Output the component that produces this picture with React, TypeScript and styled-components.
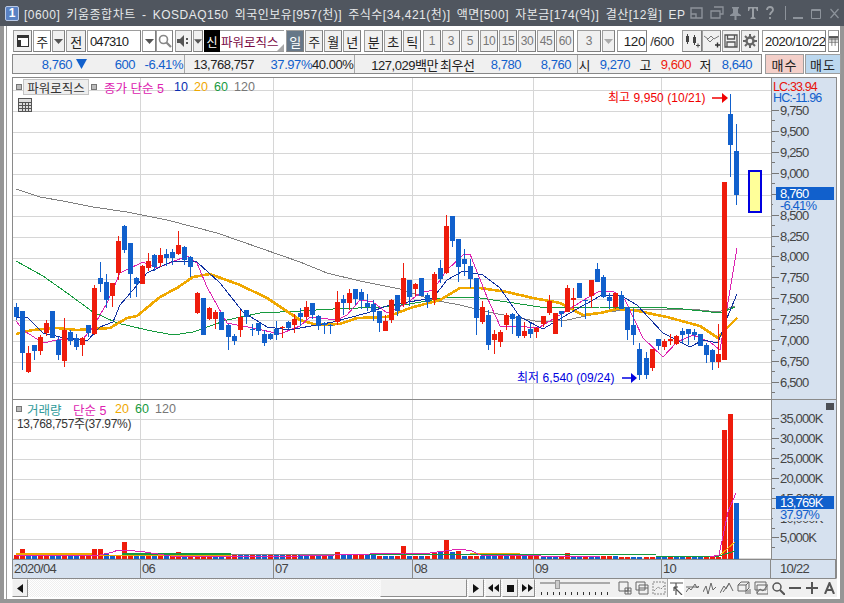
import * as React from 'react';
import styled, { createGlobalStyle } from 'styled-components';

const KR = `"Liberation Sans", "Noto Sans CJK KR", sans-serif`;
const RED = '#ee1c0c';
const BLUE = '#1160cc';
const GRID = '#d6d6d6';
const AXIS_BG = '#d6e1ef';
const LINE = '#8a8a8a';

type Raw = [number, 'r' | 'b', number, number, number, number];
interface Candle {
  x: number;
  color: string;
  wickTop: number;
  top: number;
  bottom: number;
  wickBottom: number;
}

// values were read off three crops, so each block keeps its crop offset
const blocks: { ox: number; oy: number; rows: Raw[] }[] = [
  {
    ox: 0,
    oy: 180,
    rows: [
      [49, 'b', 368, 380, 410, 420], [67, 'b', 393, 393, 518, 570], [85, 'r', 498, 518, 575, 578],
      [103, 'b', 495, 495, 513, 540], [121, 'r', 465, 471, 513, 525], [139, 'r', 420, 429, 458, 467],
      [157, 'b', 393, 393, 473, 473], [175, 'b', 470, 480, 525, 540], [193, 'r', 414, 450, 543, 560],
      [211, 'b', 450, 456, 483, 495], [229, 'b', 462, 474, 501, 510], [247, 'r', 470, 474, 495, 528],
      [265, 'b', 435, 435, 459, 470], [283, 'r', 315, 324, 462, 465], [301, 'b', 246, 294, 312, 336],
      [319, 'b', 282, 306, 360, 385], [337, 'r', 309, 309, 348, 381], [355, 'r', 168, 183, 279, 300],
      [373, 'b', 135, 138, 210, 219], [391, 'b', 189, 189, 282, 354], [409, 'b', 291, 294, 312, 351],
      [427, 'r', 255, 258, 312, 312], [445, 'r', 220, 243, 264, 272], [463, 'b', 222, 225, 261, 273],
      [481, 'r', 204, 225, 249, 260], [499, 'b', 207, 222, 234, 258], [517, 'b', 207, 216, 234, 255],
      [535, 'r', 153, 195, 222, 225], [553, 'b', 198, 201, 240, 255], [571, 'b', 228, 231, 261, 291],
      [592, 'r', 337, 339, 399, 402], [610, 'b', 354, 354, 465, 465], [628, 'r', 381, 384, 417, 420],
      [646, 'r', 390, 396, 417, 447], [664, 'b', 396, 396, 450, 450], [685, 'b', 433, 435, 471, 510],
      [703, 'b', 462, 468, 483, 495], [721, 'r', 390, 411, 450, 471], [739, 'b', 390, 390, 411, 432],
      [757, 'b', 432, 447, 450, 468], [775, 'b', 429, 429, 453, 465], [793, 'b', 450, 462, 489, 498],
      [811, 'b', 459, 462, 477, 480], [829, 'b', 423, 447, 465, 480], [847, 'r', 438, 441, 444, 474],
      [865, 'b', 423, 426, 444, 447], [883, 'r', 402, 417, 435, 459]
    ]
  },
  {
    ox: 300,
    oy: 200,
    rows: [
      [1, 'b', 325, 338, 350, 378], [19, 'r', 304, 321, 351, 358], [37, 'b', 309, 309, 345, 358],
      [55, 'b', 345, 348, 378, 390], [73, 'b', 366, 369, 375, 402], [91, 'b', 372, 375, 378, 402],
      [112, 'r', 273, 306, 366, 375], [130, 'b', 285, 297, 309, 345], [148, 'r', 267, 279, 309, 330],
      [166, 'b', 267, 267, 297, 315], [184, 'b', 267, 276, 300, 327], [202, 'b', 282, 309, 321, 333],
      [220, 'b', 300, 312, 336, 363], [238, 'b', 333, 333, 369, 396], [256, 'r', 345, 363, 393, 393],
      [274, 'r', 297, 300, 360, 369], [292, 'b', 285, 285, 333, 348], [310, 'r', 189, 234, 312, 321],
      [328, 'b', 240, 240, 291, 318], [346, 'r', 249, 252, 267, 288], [364, 'b', 234, 234, 288, 288],
      [382, 'b', 280, 285, 306, 324], [403, 'r', 216, 222, 300, 315], [421, 'b', 180, 204, 237, 249],
      [439, 'r', 45, 78, 219, 222], [457, 'b', 48, 48, 123, 141], [475, 'b', 117, 117, 201, 246],
      [493, 'b', 147, 177, 192, 228], [511, 'b', 177, 198, 237, 264], [529, 'b', 234, 234, 354, 405],
      [547, 'r', 303, 321, 366, 372], [565, 'b', 330, 345, 435, 450], [583, 'r', 390, 402, 420, 462],
      [601, 'r', 390, 396, 426, 441], [619, 'r', 339, 345, 375, 390], [637, 'b', 340, 342, 357, 402],
      [655, 'b', 348, 348, 408, 414], [673, 'r', 366, 393, 408, 414], [691, 'b', 369, 387, 402, 414],
      [709, 'r', 381, 384, 396, 414], [730, 'r', 348, 348, 372, 381], [748, 'r', 285, 303, 339, 345],
      [766, 'r', 339, 339, 402, 402], [784, 'b', 333, 333, 342, 381], [802, 'r', 255, 264, 336, 336],
      [820, 'r', 264, 294, 300, 327], [838, 'b', 249, 249, 294, 294], [856, 'b', 300, 300, 303, 357],
      [874, 'r', 240, 240, 288, 324], [892, 'b', 189, 207, 246, 246]
    ]
  },
  {
    ox: 600,
    oy: 85,
    rows: [
      [10, 'b', 570, 576, 636, 640], [28, 'b', 624, 636, 648, 672], [46, 'r', 624, 624, 666, 672],
      [64, 'b', 618, 630, 672, 672], [82, 'b', 666, 666, 735, 765], [100, 'b', 672, 720, 750, 780],
      [118, 'b', 774, 792, 870, 885], [139, 'b', 801, 819, 870, 882], [157, 'r', 792, 792, 849, 858],
      [175, 'b', 762, 762, 783, 795], [193, 'r', 762, 768, 786, 795], [211, 'r', 747, 762, 768, 780],
      [229, 'r', 750, 753, 777, 780], [247, 'b', 729, 738, 750, 777], [265, 'b', 732, 732, 747, 780],
      [283, 'b', 732, 741, 750, 765], [301, 'b', 747, 747, 783, 783], [319, 'b', 774, 780, 810, 834],
      [337, 'b', 792, 795, 831, 855], [355, 'r', 717, 807, 831, 850], [373, 'r', 291, 291, 825, 825],
      [391, 'b', 27, 87, 180, 276], [409, 'b', 117, 198, 330, 360]
    ]
  }
];

const candles: Candle[] = blocks.flatMap(({ ox, oy, rows }) =>
  rows.map(([zx, c, wt, t, b, wb]) => ({
    x: Math.floor(ox + zx / 3),
    color: c === 'r' ? RED : BLUE,
    wickTop: Math.round(oy + wt / 3),
    top: Math.round(oy + t / 3),
    bottom: Math.round(oy + b / 3),
    wickBottom: Math.round(oy + wb / 3)
  }))
);

const ma120 = '16,189 40,197 63,201 93,207 127,212 167,220 217,233 260,248 300,262 327,273 360,281 400,289 433,300 460,305 493,313 520,318 540,322 567,320 600,313 633,309 700,310 718,312 735,306';
const ma60 = '16,261 43,276 67,293 93,312 117,323 147,330 173,335 193,332 227,320 260,313 300,311 333,309 383,307 410,304 443,298 473,297 507,302 540,307 567,308 600,307 650,307 683,309 720,313 735,307';
const ma20 = '16,334 33,330 57,328 77,330 110,328 127,318 137,316 160,297 177,288 193,277 210,274 240,285 267,298 300,320 317,325 340,324 357,318 387,317 410,308 440,300 460,288 480,288 507,292 533,298 560,303 583,315 600,313 617,309 633,310 667,317 700,326 718,338 727,328 737,318';
const ma10 = '16,317 28,318 43,333 60,337 87,341 100,327 113,322 120,305 133,290 147,273 173,261 197,262 220,283 243,312 267,327 290,330 300,328 333,322 367,313 390,305 433,298 447,280 463,271 483,275 500,288 520,317 543,329 563,317 600,296 620,295 637,305 663,333 690,347 703,340 718,343 727,318 737,294';
const ma5 = '16,321 23,330 43,343 57,340 83,339 93,327 107,303 120,273 143,262 157,268 187,256 197,263 207,287 227,323 253,328 280,334 300,326 310,317 337,320 347,315 360,300 373,302 387,313 407,303 420,293 433,290 447,270 463,255 470,254 487,297 500,326 527,327 540,327 563,313 587,298 600,291 613,291 625,300 643,338 663,357 677,342 693,335 710,342 720,350 728,302 737,248';

const priceGridY = [90, 111, 132, 153, 174, 195, 216, 237, 258, 279, 299, 320, 341, 362, 383];
const volumeGridY = [419, 439, 459, 479, 499, 519, 539, 558];
const gridX = [140, 273, 412, 533, 661];

const priceLabels: [string, number][] = [
  ['9,750', 110], ['9,500', 131], ['9,250', 152], ['9,000', 173], ['8,500', 215], ['8,250', 236], ['8,000', 256],
  ['7,750', 277], ['7,500', 298], ['7,250', 319], ['7,000', 340], ['6,750', 361], ['6,500', 382]
];
const volumeLabels: [string, number][] = [
  ['35,000K', 418], ['30,000K', 438], ['25,000K', 458], ['20,000K', 478], ['15,000K', 498], ['10,000K', 518], ['5,000K', 537]
];

const volumeColors = 'rrbbrrbbrbbrrrrbbrbrbbrbrbrrbrrrrbbrrbbrbbrbbrrbbrbrbbbbrrbbrbbrbbrbrrbbbrbrrbbbrbrrbrrbbbrrbbrbbrrbrrbbrrbbrbbrbbrrrb';
const volumeOverride: Record<number, [number, string]> = {
  1: [10, RED], 13: [10, RED], 14: [10, RED], 15: [6, BLUE], 18: [17, RED], 27: [7, RED], 53: [7, RED],
  64: [13, RED], 69: [7, RED], 70: [7, BLUE], 71: [19, RED], 72: [7, BLUE], 73: [8, RED], 91: [6, RED]
};

const volumes = candles.map((c, i) => {
  const fromEnd = candles.length - 1 - i;
  if (fromEnd === 2) return { x: c.x, h: 129, color: RED };
  if (fromEnd === 1) return { x: c.x, h: 145, color: RED };
  if (fromEnd === 0) return { x: c.x, h: 56, color: BLUE };
  const over = volumeOverride[i];
  if (over) return { x: c.x, h: over[0], color: over[1] };
  return { x: c.x, h: i < 60 ? 4 : i < 100 ? 3 : 2, color: volumeColors[i] === 'b' ? BLUE : RED };
});

const GlobalStyle = createGlobalStyle`
  html, body {
    margin: 0;
    padding: 0;
    background: #fff;
  }
  * {
    box-sizing: border-box;
  }
`;

const Window = styled.div`
  width: 844px;
  height: 603px;
  display: flex;
  flex-direction: column;
  overflow: hidden;
  font-family: ${KR};
  font-size: 12px;
  color: #222;
  background: #fff;
`;

const TitleBar = styled.div`
  height: 26px;
  flex: none;
  display: flex;
  align-items: center;
  padding-left: 5px;
  background: #50565f;
  color: #e6e8ea;
  font-size: 12px;
  white-space: nowrap;
`;

const AppBadge = styled.div`
  width: 14px;
  height: 15px;
  border-radius: 2px;
  border: 1px solid #b9c9e6;
  background: #5a82c4;
  color: #fff;
  font-size: 12px;
  font-weight: bold;
  line-height: 13px;
  text-align: center;
  margin-right: 5px;
`;

const TitleText = styled.div`
  flex: none;
  width: 663px;
  letter-spacing: 0.48px;
  word-spacing: 2.5px;
`;

const TitleIcons = styled.div`
  display: flex;
  align-items: center;
  margin-left: 3px;
`;

const Body = styled.div`
  flex: 1;
  min-height: 0;
  display: flex;
  flex-direction: column;
  border-left: 4px solid #969696;
  border-right: 4px solid #969696;
  border-bottom: 4px solid #969696;
  padding: 4px 0 2px 8px;
  box-shadow: inset 2px 0 0 #fff, inset 3px 0 0 #9c9c9c;
`;

const Toolbar = styled.div`
  height: 22px;
  flex: none;
  display: flex;
  align-items: stretch;
`;

const Btn = styled.div<{ $w: number; $ml?: number; $white?: boolean; $off?: boolean; $on?: boolean }>`
  width: ${p => p.$w}px;
  margin-left: ${p => p.$ml ?? 0}px;
  flex: none;
  display: flex;
  align-items: center;
  justify-content: center;
  border: 1px solid #9d9d9d;
  border-right-color: #7f7f7f;
  border-bottom-color: #7f7f7f;
  background: ${p => (p.$on ? '#667788' : p.$white ? '#fff' : '#f0f0f0')};
  color: ${p => (p.$on ? '#fff' : p.$off ? '#777' : '#222')};
  font-size: ${p => (p.$off ? 12 : 13)}px;
  letter-spacing: -0.4px;
`;

const FieldBtn = styled(Btn)<{ $ls: number }>`
  justify-content: flex-start;
  padding-left: 2px;
  overflow: hidden;
  white-space: nowrap;
  font-size: 13px;
  letter-spacing: ${p => p.$ls}px;
`;

const BlackTag = styled.div`
  width: 16px;
  margin-left: 1px;
  flex: none;
  display: flex;
  align-items: center;
  justify-content: center;
  background: #000;
  color: #fff;
  font-size: 12px;
`;

const StockName = styled.div`
  position: relative;
  width: 64px;
  flex: none;
  display: flex;
  align-items: center;
  padding-left: 1px;
  background: #fff;
  color: #7a0a46;
  font-size: 12.5px;
  white-space: nowrap;
  border-top: 1px solid #9d9d9d;
  border-bottom: 1px solid #9d9d9d;
`;

const CornerMark = styled.span`
  position: absolute;
  right: 0;
  bottom: 0;
  width: 0;
  height: 0;
  border-left: 7px solid transparent;
  border-bottom: 7px solid #a8a8a8;
`;

const PlainLabel = styled.div`
  width: 26px;
  flex: none;
  display: flex;
  align-items: center;
  font-size: 13px;
  letter-spacing: -0.4px;
  color: #333;
`;

const FieldText = styled.span`
  width: 100%;
  padding-right: 1px;
  text-align: right;
  font-size: 13.5px;
  letter-spacing: -0.4px;
  color: #222;
`;

const InfoRow = styled.div`
  height: 20px;
  flex: none;
  display: flex;
  margin-top: 2px;
  gap: 3px;
`;

const InfoBox = styled.div`
  width: 750px;
  flex: none;
  display: flex;
  border: 1px solid #888;
  background: #f0f0f0;
  font-size: 13px;
  letter-spacing: -0.45px;
`;

const InfoSection = styled.div<{ $w: number; $last?: boolean }>`
  width: ${p => p.$w}px;
  flex: none;
  display: flex;
  align-items: center;
  border-right: ${p => (p.$last ? 'none' : '1px solid #a8a8a8')};
`;

const InfoCell = styled.span<{ $w: number; $color?: string; $left?: boolean; $pl?: number }>`
  width: ${p => p.$w}px;
  flex: none;
  padding-left: ${p => p.$pl ?? 0}px;
  text-align: ${p => (p.$left ? 'left' : 'right')};
  color: ${p => p.$color ?? '#222'};
  white-space: nowrap;
`;

const DownMark = styled.svg`
  margin-left: 4px;
  flex: none;
`;

const TradeBtn = styled.div<{ $w: number; $bg: string }>`
  width: ${p => p.$w}px;
  flex: none;
  display: flex;
  align-items: center;
  justify-content: center;
  background: ${p => p.$bg};
  border: 1px solid #9d9d9d;
  font-size: 13px;
  letter-spacing: 1px;
  margin-left: ${p => (p.$w > 36 ? 0 : -2)}px;
`;

const ChartFrame = styled.div`
  width: 825px;
  flex: none;
  margin-top: 3px;
  display: flex;
  flex-direction: column;
  border: 1px solid ${LINE};
  border-width: 1px 1px 0 1px;
`;

const Pane = styled.div<{ $h: number }>`
  height: ${p => p.$h}px;
  flex: none;
  display: flex;
  border-bottom: 1px solid ${LINE};
`;

const Plot = styled.div`
  position: relative;
  width: 758px;
  flex: none;
  background: #fff;
`;

const Chart = styled.svg`
  display: block;
`;

const AxisColumn = styled.div`
  width: 65px;
  flex: none;
  position: relative;
  background: ${AXIS_BG};
  border-left: 1px solid ${LINE};
`;

const AxisText = styled.text<{ $size?: number }>`
  font-family: "Liberation Sans", sans-serif;
  font-size: ${p => p.$size ?? 13}px;
  letter-spacing: -0.85px;
`;

const NoteText = styled.text`
  font-family: ${KR};
  font-size: 12px;
  letter-spacing: 0.05px;
`;

const Legend = styled.div<{ $top: number }>`
  position: absolute;
  left: 3px;
  top: ${p => p.$top}px;
  display: flex;
  align-items: center;
  height: 16px;
  font-size: 12.5px;
  white-space: nowrap;
`;

const Marker = styled.span`
  width: 6px;
  height: 6px;
  flex: none;
  border: 1px solid #777;
  background: #bbb;
`;

const StockChip = styled.span`
  margin: 0 2px 0 1px;
  height: 16px;
  width: 66px;
  flex: none;
  display: flex;
  align-items: center;
  justify-content: center;
  background: #eee;
  border: 1px solid #c4c4c4;
  font-size: 12.5px;
  color: #333;
`;

const Tag = styled.span<{ $color: string; $w: number; $ml?: number }>`
  color: ${p => p.$color};
  width: ${p => p.$w}px;
  margin-left: ${p => p.$ml ?? 0}px;
  flex: none;
`;

const VolumeCaption = styled.div`
  position: absolute;
  left: 4px;
  top: 14px;
  font-size: 12px;
  letter-spacing: -0.3px;
  color: #333;
  white-space: nowrap;
`;

const GridButton = styled.div`
  position: absolute;
  left: 5px;
  top: 20px;
  line-height: 0;
`;

const CloseChip = styled.div`
  position: absolute;
  right: 2px;
  top: 3px;
  width: 8px;
  height: 7px;
  background: #4c4f55;
`;

const DateAxis = styled.div`
  height: 18px;
  flex: none;
  display: flex;
  background: ${AXIS_BG};
`;

const DateCell = styled.div<{ $w: number; $pad?: number }>`
  width: ${p => p.$w}px;
  flex: none;
  padding-left: ${p => p.$pad ?? 1}px;
  border-right: 1px solid ${LINE};
  font-size: 13px;
  letter-spacing: -0.7px;
  line-height: 18px;
  color: #444;
`;

const BottomBar = styled.div`
  width: 825px;
  height: 19px;
  flex: none;
  display: flex;
  align-items: stretch;
  border-top: 1px solid ${LINE};
  border-right: 1px solid #f0f0f0;
  background: repeating-conic-gradient(#efefef 0 25%, #fff 0 50%) 0 0 / 2px 2px;
`;

const BarBtn = styled.div<{ $w: number; $ml?: number }>`
  width: ${p => p.$w}px;
  margin-left: ${p => p.$ml ?? 0}px;
  flex: none;
  display: flex;
  align-items: center;
  justify-content: center;
  background: #f0f0f0;
  border: 1px solid #f8f8f8;
  border-right-color: #8d8d8d;
  border-bottom-color: #8d8d8d;
`;

const BarFiller = styled.div`
  width: 352px;
  flex: none;
`;

const ToolGroup = styled.div`
  flex: 1;
  margin-left: 1px;
  display: flex;
  align-items: center;
  background: #f0f0f0;
`;

const ActiveTool = styled.div`
  width: 17px;
  height: 18px;
  flex: none;
  display: flex;
  align-items: center;
  justify-content: center;
  background: #fff;
  border-left: 1px solid #aaa;
  margin-left: 1px;
`;

const ToolIcon = styled.svg<{ $ml?: number }>`
  flex: none;
  display: block;
  margin-left: ${p => p.$ml ?? 0}px;
`;

const TitleIcon = styled.svg<{ $w: number; $ml: number }>`
  width: ${p => p.$w}px;
  height: 14px;
  margin-left: ${p => p.$ml}px;
  flex: none;
`;

const Caret = ({ color = '#555' }: { color?: string }) => (
  <svg width="9" height="5" viewBox="0 0 9 5">
    <path d="M0 0h9L4.5 5z" fill={color} />
  </svg>
);

const Polyline = ({ points, color, width = 1 }: { points: string; color: string; width?: number }) => (
  <polyline points={points} fill="none" stroke={color} strokeWidth={width} />
);

const GridLines = ({ rows, top, bottom }: { rows: number[]; top: number; bottom: number }) => (
  <g stroke={GRID} strokeWidth="1" shapeRendering="crispEdges">
    {rows.map(y => (
      <line key={y} x1="13" x2="771" y1={y + 0.5} y2={y + 0.5} />
    ))}
    {gridX.map(x => (
      <line key={x} x1={x + 0.5} x2={x + 0.5} y1={top} y2={bottom} />
    ))}
  </g>
);

const PriceChart = () => (
  <Chart width="758" height="321" viewBox="13 78 758 321">
    <GridLines rows={priceGridY} top={78} bottom={399} />
    <g shapeRendering="crispEdges">
      <Polyline points={ma120} color="#808080" />
      <Polyline points={ma60} color="#169a3e" />
      <Polyline points={ma20} color="#f0a800" width={2.6} />
      <Polyline points={ma5} color="#dd22b0" />
      <Polyline points={ma10} color="#1030a0" />
      {candles.map(c => (
        <g key={c.x} fill={c.color}>
          <rect x={c.x} y={c.wickTop} width="1" height={Math.max(c.wickBottom - c.wickTop, 1)} />
          <rect x={c.x - 2} y={c.top} width="5" height={Math.max(c.bottom - c.top, 1)} />
        </g>
      ))}
      <rect x="749" y="171" width="12" height="41" fill="#ffff99" stroke="#0000e0" strokeWidth="2" />
    </g>
    <NoteText x="608" y="102" fill="#f00000">최고 9,950 (10/21)</NoteText>
    <path d="M712 98h10" stroke="#f00000" strokeWidth="1.500" />
    <path d="M722 93l6 5-6 5z" fill="#f00000" />
    <NoteText x="517" y="382" fill="#0000e0">최저 6,540 (09/24)</NoteText>
    <path d="M622 378h9" stroke="#0000e0" strokeWidth="1.500" />
    <path d="M631 373l6 5-6 5z" fill="#0000e0" />
  </Chart>
);

const VolumeChart = () => (
  <Chart width="758" height="159" viewBox="13 400 758 159">
    <GridLines rows={volumeGridY} top={400} bottom={559} />
    <g shapeRendering="crispEdges">
      {volumes.map(v => (
        <rect key={v.x} x={v.x - 2} y={559 - v.h} width="5" height={v.h} fill={v.color} />
      ))}
      <Polyline points="16,554 92,554" color="#f0a800" width={2} />
      <Polyline points="92,555 231,555" color="#f0a800" />
      <Polyline points="122,554 231,554" color="#169a3e" width={2} />
      <Polyline points="231,555 340,554" color="#808080" />
      <Polyline points="340,555 656,554" color="#169a3e" />
      <Polyline points="470,553 520,553" color="#f0a800" />
      <Polyline points="656,556 719,556 735,542" color="#f0a800" />
      <Polyline points="656,556 719,556 735,551" color="#169a3e" />
      <Polyline points="16,556 100,555 113,552 118,550 135,551 145,552 170,556 230,557 300,556 405,553 430,553 445,551 460,549 472,551 480,555 600,557 710,557 719,555 728,512 736,493" color="#dd22b0" />
    </g>
  </Chart>
);

const PriceAxis = () => (
  <Chart width="64" height="321" viewBox="772 78 64 321">
    <g stroke="#777" shapeRendering="crispEdges">
      {priceLabels.concat([['', 194]]).map(([, y]) => (
        <g key={y}>
          <line x1="772" x2="779" y1={y + 0.5} y2={y + 0.5} />
          <line x1="772" x2="775" y1={y + 10.5} y2={y + 10.5} />
        </g>
      ))}
    </g>
    <AxisText x="773" y="91" fill="#e8120a" $size={12.5}>LC:33.94</AxisText>
    <AxisText x="773" y="102" fill={BLUE} $size={12.5}>HC:-11.96</AxisText>
    {priceLabels.map(([t, y]) => (
      <AxisText key={t} x="780" y={y + 5} fill="#444">{t}</AxisText>
    ))}
    <rect x="773" y="200" width="60" height="11" fill={AXIS_BG} />
    <rect x="776" y="187" width="58" height="13" fill={BLUE} />
    <AxisText x="780" y="198" fill="#fff">8,760</AxisText>
    <AxisText x="780" y="210" fill={BLUE}>-6.41%</AxisText>
  </Chart>
);

const VolumeAxis = () => (
  <Chart width="64" height="159" viewBox="772 400 64 159">
    <g stroke="#777" shapeRendering="crispEdges">
      {volumeLabels.map(([t, y]) => (
        <g key={t}>
          <line x1="772" x2="779" y1={y + 0.5} y2={y + 0.5} />
          <line x1="772" x2="775" y1={y + 10.5} y2={y + 10.5} />
        </g>
      ))}
    </g>
    {volumeLabels.map(([t, y]) => (
      <AxisText key={t} x="780" y={y + 5} fill="#444">{t}</AxisText>
    ))}
    <rect x="773" y="509" width="60" height="12" fill={AXIS_BG} />
    <rect x="776" y="496" width="58" height="13" fill={BLUE} />
    <AxisText x="780" y="507" fill="#fff">13,769K</AxisText>
    <AxisText x="780" y="519" fill={BLUE}>37.97%</AxisText>
  </Chart>
);

const WindowTools = () => (
  <TitleIcons>
    <TitleIcon $w={13} $ml={0} viewBox="0 0 13 14" fill="none" stroke="#8d939b" strokeWidth="1.4">
      <path d="M1 2h11v10H1zM1 8h5v4" />
    </TitleIcon>
    <TitleIcon $w={14} $ml={7} viewBox="0 0 14 14" fill="none" stroke="#8d939b" strokeWidth="1.3">
      <path d="M4 1h9v7h-3M1 5h9v7H1z" />
    </TitleIcon>
    <TitleIcon $w={13} $ml={5} viewBox="0 0 13 14" fill="#8d939b">
      <path d="M3 1h7v1l-1 1v4l3 2v1H7.5v4h-2v-4H1V9l3-2V3L3 2z" />
    </TitleIcon>
    <TitleIcon $w={10} $ml={6} viewBox="0 0 10 14" fill="#9a9fa5">
      <path d="M0 1h10v4H9L8 2.5H6V11l1.5 1v1h-5v-1L4 11V2.5H2L1 5H0z" />
    </TitleIcon>
    <TitleIcon $w={8} $ml={8} viewBox="0 0 8 14" fill="none" stroke="#9a9fa5" strokeWidth="1.8">
      <path d="M1 4c0-4 6-4 6 0 0 2-3 2-3 5M4 11v2" />
    </TitleIcon>
    <TitleIcon $w={1} $ml={11} viewBox="0 0 1 14" fill="#8d939b">
      <rect width="1" height="14" />
    </TitleIcon>
    <TitleIcon $w={10} $ml={7} viewBox="0 0 10 14" fill="#8d939b">
      <rect y="11" width="10" height="2" />
    </TitleIcon>
    <TitleIcon $w={10} $ml={8} viewBox="0 0 10 14" fill="none" stroke="#8d939b" strokeWidth="1">
      <path d="M.5 3.5h9v9h-9zM.5 4.5h9" />
    </TitleIcon>
    <TitleIcon $w={9} $ml={9} viewBox="0 0 9 14" fill="none" stroke="#8d939b" strokeWidth="1.2">
      <path d="M.5 3l8 9M8.5 3l-8 9" />
    </TitleIcon>
  </TitleIcons>
);

const TopToolbar = () => (
  <Toolbar>
    <Btn $w={19} $ml={1}>
      <svg width="14" height="14" viewBox="0 0 14 14">
        <rect x="1.5" y="1.5" width="11" height="11" fill="#fff" stroke="#333" />
        <path d="M1 6h4v7H1zM2 2h11v2H2z" fill="#333" />
      </svg>
    </Btn>
    <Btn $w={18} $ml={1} $white>주</Btn>
    <Btn $w={13} $ml={1}><Caret /></Btn>
    <Btn $w={20} $ml={1}>전</Btn>
    <FieldBtn $w={54} $ml={1} $ls={-0.9} $white>047310</FieldBtn>
    <Btn $w={14} $ml={1} $white><Caret /></Btn>
    <Btn $w={17} $white>
      <svg width="14" height="14" viewBox="0 0 14 14" fill="none" stroke="#888" strokeWidth="1.6">
        <circle cx="5.5" cy="5.5" r="4" />
        <path d="M8.5 8.5l4.5 4.5" strokeWidth="2.2" />
      </svg>
    </Btn>
    <Btn $w={17} $ml={2}>
      <svg width="13" height="12" viewBox="0 0 13 12" fill="#555">
        <path d="M0 4h3l4-4v12L3 8H0zM9 3h2v2H9zM9 7h2v2H9z" />
      </svg>
    </Btn>
    <Btn $w={10} $ml={1}><Caret /></Btn>
    <BlackTag>신</BlackTag>
    <StockName>파워로직스<CornerMark /></StockName>
    <Btn $w={18} $ml={2} $on>일</Btn>
    <Btn $w={18} $ml={1}>주</Btn>
    <Btn $w={18} $ml={1}>월</Btn>
    <Btn $w={18} $ml={1}>년</Btn>
    <Btn $w={19} $ml={3}>분</Btn>
    <Btn $w={18} $ml={1}>초</Btn>
    <Btn $w={18} $ml={1}>틱</Btn>
    {['1', '3', '5', '10', '15', '30', '45', '60'].map((n, i) => (
      <Btn key={n} $w={18} $ml={i === 0 ? 2 : 1} $off>{n}</Btn>
    ))}
    <Btn $w={24} $ml={3} $off>3</Btn>
    <Btn $w={13} $ml={1}><Caret color="#aaa" /></Btn>
    <Btn $w={30} $ml={2} $white>
      <FieldText>120</FieldText>
    </Btn>
    <PlainLabel>&nbsp;/600</PlainLabel>
    <Btn $w={20} $ml={9}>
      <svg width="16" height="14" viewBox="0 0 16 14" fill="#444">
        <path d="M2 2h3v6H2zM9 3h3v6H9zM3 0h1v10H3zM10 1h1v10h-1zM12 11h4v1h-4zM13.5 9.500h1v4h-1z" />
      </svg>
    </Btn>
    <Btn $w={19}>
      <svg width="16" height="14" viewBox="0 0 16 14" fill="none" stroke="#777">
        <path d="M0 2l4 3 3-3 3 3 5-3M3 5l3 3 3-3" />
        <path d="M11 11h5M13.500 8.500v5" stroke="#333" strokeWidth="1.400" />
      </svg>
    </Btn>
    <Btn $w={18} $ml={1}>
      <svg width="14" height="14" viewBox="0 0 14 14" fill="none" stroke="#555" strokeWidth="1.300">
        <path d="M1 1h12v12H1zM3.500 1v4h7V1M3 13V8h8v5" />
      </svg>
    </Btn>
    <Btn $w={18} $ml={1}>
      <svg width="14" height="14" viewBox="0 0 14 14" fill="none" stroke="#666">
        <circle cx="7" cy="7" r="3.500" strokeWidth="2.400" />
        <path d="M7 0v3M7 11v3M0 7h3M11 7h3M2 2l2 2M10 10l2 2M12 2l-2 2M4 10l-2 2" strokeWidth="2" />
      </svg>
    </Btn>
    <FieldBtn $w={64} $ml={3} $ls={-0.45} $white>2020/10/22</FieldBtn>
    <Btn $w={11} $ml={2} $white>
      <svg width="11" height="12" viewBox="0 0 11 12" fill="none" stroke="#666">
        <path d="M0 1.500h11M0 4.500h11M0 7.500h11M3.500 3v9M7.500 3v9" />
        <rect y="0" width="11" height="3" fill="#555" stroke="none" />
      </svg>
    </Btn>
  </Toolbar>
);

const Quotes = () => (
  <InfoRow>
    <InfoBox>
      <InfoSection $w={172}>
        <InfoCell $w={59} $color={BLUE}>8,760</InfoCell>
        <DownMark width="11" height="10" viewBox="0 0 11 10">
          <path d="M0 0h11L5.500 10z" fill={BLUE} />
        </DownMark>
        <InfoCell $w={48} $color={BLUE}>600</InfoCell>
        <InfoCell $w={48} $color={BLUE}>-6.41%</InfoCell>
      </InfoSection>
      <InfoSection $w={170}>
        <InfoCell $w={69}>13,768,757</InfoCell>
        <InfoCell $w={58} $color={BLUE}>37.97%</InfoCell>
        <InfoCell $w={41}>40.00%</InfoCell>
      </InfoSection>
      <InfoSection $w={223}>
        <InfoCell $w={83}>127,029백만</InfoCell>
        <InfoCell $w={40} $left $pl={2}>최우선</InfoCell>
        <InfoCell $w={43} $color={BLUE}>8,780</InfoCell>
        <InfoCell $w={50} $color={BLUE}>8,760</InfoCell>
      </InfoSection>
      <InfoSection $w={183} $last>
        <InfoCell $w={12}>시</InfoCell>
        <InfoCell $w={40} $color={BLUE}>9,270</InfoCell>
        <InfoCell $w={21}>고</InfoCell>
        <InfoCell $w={40} $color={RED}>9,600</InfoCell>
        <InfoCell $w={20}>저</InfoCell>
        <InfoCell $w={41} $color={BLUE}>8,640</InfoCell>
      </InfoSection>
    </InfoBox>
    <TradeBtn $w={39} $bg="#f3cfc9">매수</TradeBtn>
    <TradeBtn $w={36} $bg="#bcd8ef">매도</TradeBtn>
  </InfoRow>
);

const BottomControls = () => (
  <BottomBar>
    <BarBtn $w={16}>
      <svg width="6" height="9" viewBox="0 0 6 9"><path d="M6 0v9L0 4.500z" fill="#111" /></svg>
    </BarBtn>
    <BarFiller />
    <BarBtn $w={87} />
    <BarBtn $w={16} $ml={1}>
      <svg width="6" height="9" viewBox="0 0 6 9"><path d="M0 0v9l6-4.500z" fill="#111" /></svg>
    </BarBtn>
    <BarBtn $w={16} $ml={1}>
      <svg width="11" height="8" viewBox="0 0 11 8"><path d="M5 0v8L0 4zM11 0v8L6 4z" fill="#111" /></svg>
    </BarBtn>
    <BarBtn $w={16} $ml={1}>
      <svg width="7" height="7" viewBox="0 0 7 7"><rect width="7" height="7" fill="#111" /></svg>
    </BarBtn>
    <BarBtn $w={16} $ml={1}>
      <svg width="11" height="8" viewBox="0 0 11 8"><path d="M0 0v8l5-4zM6 0v8l5-4z" fill="#111" /></svg>
    </BarBtn>
    <ToolGroup>
      <ToolIcon width="79" height="18" viewBox="0 0 79 18" $ml={2} shapeRendering="crispEdges">
        <rect x="2" y="3" width="70" height="2" fill="#aaa" />
        <rect x="17" y="1" width="4" height="8" fill="#ccc" stroke="#999" />
        {Array.from({ length: 12 }, (_, i) => (
          <rect key={i} x={3 + i * 6} y="13" width="1" height="3" fill="#333" />
        ))}
      </ToolIcon>
      <ToolIcon width="14" height="14" viewBox="0 0 14 14" fill="none" stroke="#666" $ml={1}>
        <path d="M1 1h9v9H1zM7 7h6v6H7zM10 7v6M7 10h6" />
      </ToolIcon>
      <ToolIcon width="14" height="14" viewBox="0 0 14 14" fill="none" stroke="#666" $ml={3}>
        <path d="M1 1h9v8H1zM4 4h9v9H4zM4 7h9" />
      </ToolIcon>
      <ToolIcon width="14" height="14" viewBox="0 0 14 14" fill="none" stroke="#888" strokeDasharray="2 1" $ml={3}>
        <path d="M1 1h12v12H1zM2 10l4-4 3 2 4-4" />
      </ToolIcon>
      <ActiveTool>
        <svg width="13" height="13" viewBox="0 0 13 13" fill="none" stroke="#555" strokeWidth="1.200">
          <path d="M0 1h13M6 1v12M4 5l8 8M4 5h4M4 5v4" />
        </svg>
      </ActiveTool>
      {[
        'M0 11l3-4 2 2 4-6 2 4 2-2M0 6h13',
        'M0 11l3-6 2 8 3-11 2 7 3-3',
        'M0 12l4-7 2 3 3-6 4 8M3 11l6-8',
        'M1 4h8v6H1zM1 4l3-3h8v6l-3 3M9 4l3-3M11 9v4M9 10v3M13 8v5',
        'M1 1h11v8H1zM3 4h11v9H3zM3 12l3-4 3 2 4-5'
      ].map((d, i) => (
        <ToolIcon key={d} width="14" height="14" viewBox="0 0 14 14" fill="none" stroke="#666" $ml={i === 0 ? 2 : 3}>
          <path d={d} />
        </ToolIcon>
      ))}
      <ToolIcon width="13" height="13" viewBox="0 0 13 13" fill="none" stroke="#555" strokeWidth="1.500" $ml={4}>
        <circle cx="5" cy="5" r="4" />
        <path d="M8 8l5 5" strokeWidth="2" />
      </ToolIcon>
      <ToolIcon width="12" height="12" viewBox="0 0 12 12" fill="#555" $ml={4}>
        <rect y="5" width="12" height="2" />
      </ToolIcon>
      <ToolIcon width="12" height="12" viewBox="0 0 12 12" fill="#555" $ml={5}>
        <path d="M0 5h12v2H0zM5 0h2v12H5z" />
      </ToolIcon>
      <ToolIcon width="11" height="12" viewBox="0 0 11 12" fill="none" stroke="#555" strokeWidth="2" $ml={6}>
        <path d="M1 12L5.500 1 10 12M3 8h5" />
      </ToolIcon>
    </ToolGroup>
  </BottomBar>
);

export default function App() {
  return (
    <Window>
      <GlobalStyle />
      <TitleBar>
        <AppBadge>1</AppBadge>
        <TitleText>
          [0600] 키움종합차트 - KOSDAQ150 외국인보유[957(천)] 주식수[34,421(천)] 액면[500] 자본금[174(억)] 결산[12월] EP
        </TitleText>
        <WindowTools />
      </TitleBar>
      <Body>
        <TopToolbar />
        <Quotes />
        <ChartFrame>
          <Pane $h={322}>
            <Plot>
              <PriceChart />
              <Legend $top={1}>
                <Marker />
                <StockChip>파워로직스</StockChip>
                <Marker />
                <Tag $color="#dd22b0" $w={70} $ml={7}>종가 단순 5</Tag>
                <Tag $color="#0a2eb0" $w={20}>10</Tag>
                <Tag $color="#f0a800" $w={20}>20</Tag>
                <Tag $color="#169a3e" $w={20}>60</Tag>
                <Tag $color="#777" $w={24}>120</Tag>
              </Legend>
              <GridButton>
                <svg width="14" height="14" viewBox="0 0 14 14" fill="#ddd" stroke="#555" shapeRendering="crispEdges">
                  <path d="M.5.5h13v13H.5zM.5 4.500h13M.5 7.500h13M.5 10.500h13M4.500 4v10M7.500 4v10M10.500 4v10" />
                </svg>
              </GridButton>
            </Plot>
            <AxisColumn>
              <PriceAxis />
            </AxisColumn>
          </Pane>
          <Pane $h={160}>
            <Plot>
              <VolumeChart />
              <Legend $top={1}>
                <Marker />
                <Tag $color="#2e9a9a" $w={46} $ml={5}>거래량</Tag>
                <Tag $color="#dd22b0" $w={42}>단순 5</Tag>
                <Tag $color="#f0a800" $w={20}>20</Tag>
                <Tag $color="#169a3e" $w={20}>60</Tag>
                <Tag $color="#777" $w={24}>120</Tag>
              </Legend>
              <VolumeCaption>13,768,757주(37.97%)</VolumeCaption>
            </Plot>
            <AxisColumn>
              <VolumeAxis />
              <CloseChip />
            </AxisColumn>
          </Pane>
          <DateAxis>
            <DateCell $w={128}>2020/04</DateCell>
            <DateCell $w={133}>06</DateCell>
            <DateCell $w={139}>07</DateCell>
            <DateCell $w={121}>08</DateCell>
            <DateCell $w={128}>09</DateCell>
            <DateCell $w={109}>10</DateCell>
            <DateCell $w={65} $pad={9}>10/22</DateCell>
          </DateAxis>
        </ChartFrame>
        <BottomControls />
      </Body>
    </Window>
  );
}
